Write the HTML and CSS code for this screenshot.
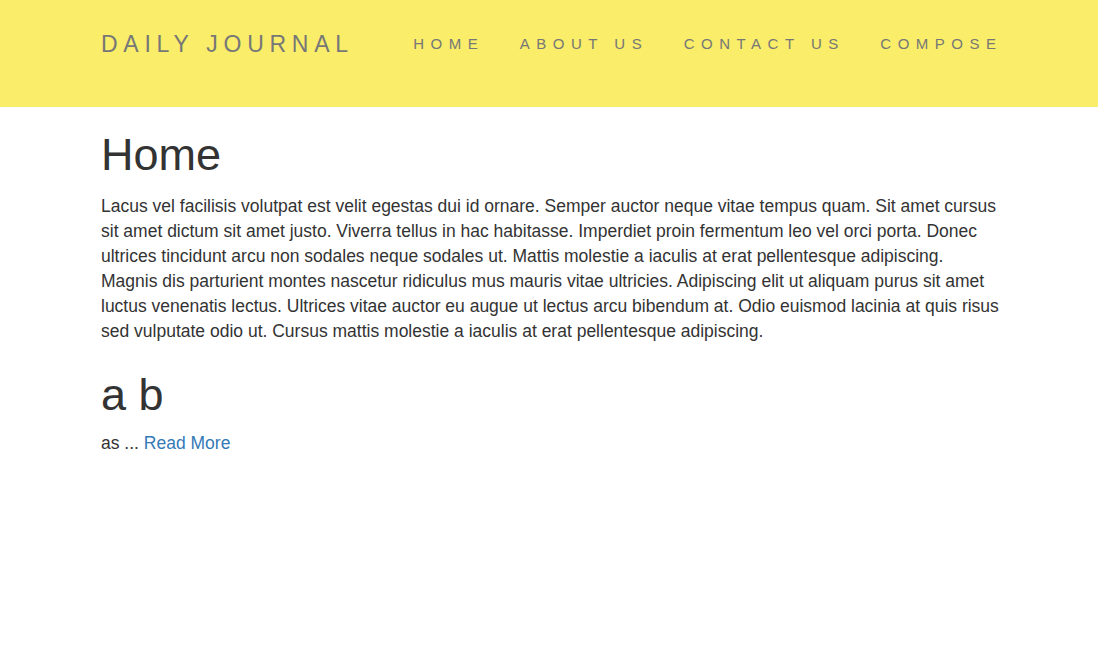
FILE: index.html
```html
<!DOCTYPE html>
<html lang="en">
<head>
<meta charset="utf-8">
<title>Daily Journal</title>
<link rel="stylesheet" href="styles.css">
</head>
<body>
<header class="navbar">
  <div class="container nav-inner">
    <a class="brand" href="#">DAILY JOURNAL</a>
    <ul class="nav-links">
      <li><a href="#">HOME</a></li>
      <li><a href="#">ABOUT US</a></li>
      <li><a href="#">CONTACT US</a></li>
      <li><a href="#">COMPOSE</a></li>
    </ul>
  </div>
</header>
<main class="container content">
  <h1>Home</h1>
  <p>Lacus vel facilisis volutpat est velit egestas dui id ornare. Semper auctor neque vitae tempus quam. Sit amet cursus sit amet dictum sit amet justo. Viverra tellus in hac habitasse. Imperdiet proin fermentum leo vel orci porta. Donec ultrices tincidunt arcu non sodales neque sodales ut. Mattis molestie a iaculis at erat pellentesque adipiscing. Magnis dis parturient montes nascetur ridiculus mus mauris vitae ultricies. Adipiscing elit ut aliquam purus sit amet luctus venenatis lectus. Ultrices vitae auctor eu augue ut lectus arcu bibendum at. Odio euismod lacinia at quis risus sed vulputate odio ut. Cursus mattis molestie a iaculis at erat pellentesque adipiscing.</p>
  <h1>a b</h1>
  <p>as ... <a class="more" href="#">Read More</a></p>
</main>
</body>
</html>
```
FILE: styles.css
```css
html, body {
  margin: 0;
  padding: 0;
}
body {
  font-family: "Liberation Sans", Arial, Helvetica, sans-serif;
  color: #333333;
  background: #ffffff;
}
.container {
  width: 900px;
  padding-left: 4px;
  margin: 0 auto;
}
.navbar {
  background: #f9ed69;
  height: 107px;
}
.nav-inner {
  display: flex;
  align-items: center;
  height: 88px;
}
.brand {
  font-size: 23px;
  letter-spacing: 5.75px;
  color: #777777;
  text-decoration: none;
  white-space: nowrap;
}
.nav-links {
  list-style: none;
  margin: 0 5px 0 auto;
  padding: 0;
  display: flex;
  gap: 42px;
}
.nav-links li {
  white-space: nowrap;
}
.nav-links a {
  font-size: 15px;
  letter-spacing: 6.5px;
  color: #777777;
  text-decoration: none;
  margin-right: -6.5px;
}
.content h1 {
  font-size: 45px;
  font-weight: 500;
  line-height: 1.1;
  margin: 23px 0 14px;
}
.content p {
  font-size: 17.5px;
  line-height: 25px;
  margin: 0 0 26px;
}
.content h1 + p:last-child {
  margin-top: -2px;
}
.more {
  color: #337ab7;
  text-decoration: none;
}
```
